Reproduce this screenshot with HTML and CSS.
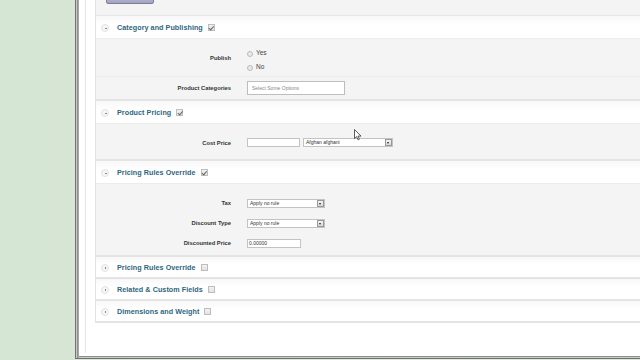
FILE: index.html
```html
<!DOCTYPE html>
<html>
<head>
<meta charset="utf-8">
<link rel="stylesheet" href="styles.css">
</head>
<body>
<div class="desktop">
  <div class="window">
    <div class="inner">
      <div class="panel">
        <div class="topbar"><span class="topbtn"></span></div>

        <section class="box">
          <div class="hd"><span class="tog open"></span><span class="title">Category and Publishing</span><span class="cb on"></span></div>
          <div class="bd bd1">
            <div class="row row-publish">
              <div class="lbl">Publish</div>
              <div class="fld radios">
                <label class="radio"><span class="rd"></span>Yes</label>
                <label class="radio"><span class="rd"></span>No</label>
              </div>
            </div>
            <div class="row row-cat">
              <div class="lbl">Product Categories</div>
              <div class="fld"><div class="multi">Select Some Options</div></div>
            </div>
          </div>
        </section>

        <section class="box">
          <div class="hd"><span class="tog open"></span><span class="title">Product Pricing</span><span class="cb on"></span></div>
          <div class="bd bd2">
            <div class="row row-cost">
              <div class="lbl">Cost Price</div>
              <div class="fld"><span class="inp inp-cost"></span><span class="sel sel-cur">Afghan afghani<span class="arr"></span></span></div>
            </div>
          </div>
        </section>

        <section class="box">
          <div class="hd"><span class="tog open"></span><span class="title">Pricing Rules Override</span><span class="cb on"></span></div>
          <div class="bd bd3">
            <div class="row row-s">
              <div class="lbl">Tax</div>
              <div class="fld"><span class="sel sel-rule">Apply no rule<span class="arr"></span></span></div>
            </div>
            <div class="row row-s">
              <div class="lbl">Discount Type</div>
              <div class="fld"><span class="sel sel-rule">Apply no rule<span class="arr"></span></span></div>
            </div>
            <div class="row row-s">
              <div class="lbl">Discounted Price</div>
              <div class="fld"><span class="inp inp-disc">0.00000</span></div>
            </div>
          </div>
        </section>

        <section class="box closed">
          <div class="hd"><span class="tog"></span><span class="title">Pricing Rules Override</span><span class="cb"></span></div>
        </section>
        <section class="box closed">
          <div class="hd"><span class="tog"></span><span class="title">Related &amp; Custom Fields</span><span class="cb"></span></div>
        </section>
        <section class="box closed last">
          <div class="hd"><span class="tog"></span><span class="title">Dimensions and Weight</span><span class="cb"></span></div>
        </section>
      </div>
    </div>
  </div>
  <svg class="cursor" width="8" height="12" viewBox="0 0 8 12"><path d="M0.5 0.5 L0.5 9.5 L2.6 7.6 L4 10.8 L5.4 10.2 L4 7.1 L7 7.1 Z" fill="#fff" stroke="#333" stroke-width="0.8"/></svg>
</div>
</body>
</html>
```

FILE: styles.css
```css
html, body {
  margin: 0;
  padding: 0;
}
body {
  width: 640px;
  height: 360px;
  overflow: hidden;
  font-family: "Liberation Sans", Arial, sans-serif;
}
.desktop {
  position: relative;
  width: 640px;
  height: 360px;
  background: linear-gradient(90deg, #d5e5d3 0%, #dfeadd 70%, #d9e6d7 100%);
  display: flex;
  align-items: flex-start;
}
.window {
  margin-left: 75px;
  flex: 1;
  height: 355px;
  border-left: 1px solid #6f726f;
  border-bottom: 1px solid #6f726f;
  box-shadow: inset 1px 0 0 #c9cbc9, inset 2px 0 0 #8d908d, inset 3px 0 0 #a5a7a5, inset 0 -1px 0 #c9cbc9, inset 0 -2px 0 #8d908d;
  padding-left: 4px;
  padding-bottom: 3px;
  background: #fff;
  display: flex;
}
.inner {
  flex: 1;
  margin-left: 5px;
  border-left: 1px solid #e6e6e6;
  padding-left: 9px;
  height: 353px;
  background: #fff;
}
.panel {
  background: #f4f4f4;
  border-left: 1px solid #e3e3e3;
}
.topbar {
  height: 15px;
  position: relative;
}
.topbtn {
  position: absolute;
  left: 10px;
  top: -4px;
  width: 46px;
  height: 6px;
  border: 1px solid #7c7ea0;
  border-radius: 2px;
  background: linear-gradient(#b9bbd4, #a0a2c0);
}
.box {
  border-top: 2px solid #e4e4e4;
  box-shadow: inset 0 1px 0 #ededed;
}
.box:first-of-type {
  border-top: 1px solid #e6e6e6;
}
.box.last {
  border-bottom: 2px solid #e4e4e4;
}
.hd {
  height: 22px;
  display: flex;
  align-items: center;
  background: linear-gradient(#f8f8f8, #ffffff 40%, #ffffff);
  padding-left: 5px;
}
.closed .hd {
  height: 20px;
}
.tog {
  width: 8px;
  height: 8px;
  border-radius: 50%;
  background: #f6f6f6;
  border: 1px solid #e2e2e2;
  box-sizing: border-box;
  position: relative;
  margin-right: 8px;
  margin-top: 1px;
}
.tog::after {
  content: "";
  position: absolute;
  left: 2.5px;
  top: 3px;
  width: 2px;
  height: 1px;
  background: #888;
}
.tog:not(.open)::after {
  left: 2.5px;
  top: 2px;
  width: 1px;
  height: 2px;
  background: none;
  border-left: 1px solid #888;
}
.title {
  font-size: 7.2px;
  font-weight: bold;
  color: #2f6680;
  letter-spacing: 0.05px;
}
.cb {
  width: 7px;
  height: 7px;
  box-sizing: border-box;
  border: 1px solid #bdbdbd;
  background: linear-gradient(#f2f2f2, #e2e2e2);
  margin-left: 5px;
  position: relative;
}
.cb.on::after {
  content: "";
  position: absolute;
  left: 1.5px;
  top: 0px;
  width: 1.5px;
  height: 3.5px;
  border-right: 1px solid #666;
  border-bottom: 1px solid #666;
  transform: rotate(40deg);
}
.bd {
  border-top: 1px solid #ececec;
}
.row {
  display: grid;
  grid-template-columns: 135px 1fr;
  column-gap: 16px;
  align-items: center;
}
.lbl {
  text-align: right;
  font-size: 5.8px;
  font-weight: bold;
  color: #333;
}
.fld {
  display: flex;
  align-items: center;
}
.row-publish {
  height: 37px;
  border-bottom: 1px solid #ececec;
}
.radios {
  flex-direction: column;
  align-items: flex-start;
  gap: 5px;
  padding-top: 4px;
}
.radio {
  display: flex;
  align-items: center;
  font-size: 6.5px;
  color: #444;
}
.rd {
  width: 6px;
  height: 6px;
  box-sizing: border-box;
  border-radius: 50%;
  border: 1px solid #bbb;
  background: #e9e9e9;
  margin-right: 3px;
  margin-top: 3px;
}
.row-cat {
  height: 22px;
}
.multi {
  width: 98px;
  height: 14px;
  box-sizing: border-box;
  border: 1px solid #bdbdbd;
  background: #fff;
  font-size: 5px;
  color: #888;
  line-height: 12px;
  padding-left: 4px;
}
.bd2 {
  padding-top: 10px;
  padding-bottom: 8px;
}
.row-cost {
  height: 17px;
}
.inp {
  display: inline-block;
  box-sizing: border-box;
  height: 9px;
  border: 1px solid #c3c3c3;
  background: #fff;
  font-size: 5px;
  line-height: 7px;
  color: #333;
  padding-left: 1px;
}
.inp-cost {
  width: 53px;
  margin-right: 3px;
}
.inp-disc {
  width: 54px;
}
.sel {
  display: inline-block;
  position: relative;
  box-sizing: border-box;
  height: 9px;
  border: 1px solid #c3c3c3;
  background: #fff;
  font-size: 5px;
  line-height: 7px;
  color: #333;
  padding-left: 2px;
}
.sel-cur {
  width: 90px;
}
.sel-rule {
  width: 78px;
}
.arr {
  position: absolute;
  right: 0px;
  top: 0px;
  width: 7px;
  height: 7px;
  box-sizing: border-box;
  border: 1px solid #999;
  background: linear-gradient(#f4f4f4, #d8d8d8);
}
.arr::after {
  content: "";
  position: absolute;
  left: 1px;
  top: 2px;
  border-left: 1.5px solid transparent;
  border-right: 1.5px solid transparent;
  border-top: 2px solid #222;
}
.bd3 {
  padding-top: 9px;
  padding-bottom: 2px;
}
.row-s {
  height: 20px;
}
.cursor {
  position: absolute;
  left: 354px;
  top: 129px;
}
```
